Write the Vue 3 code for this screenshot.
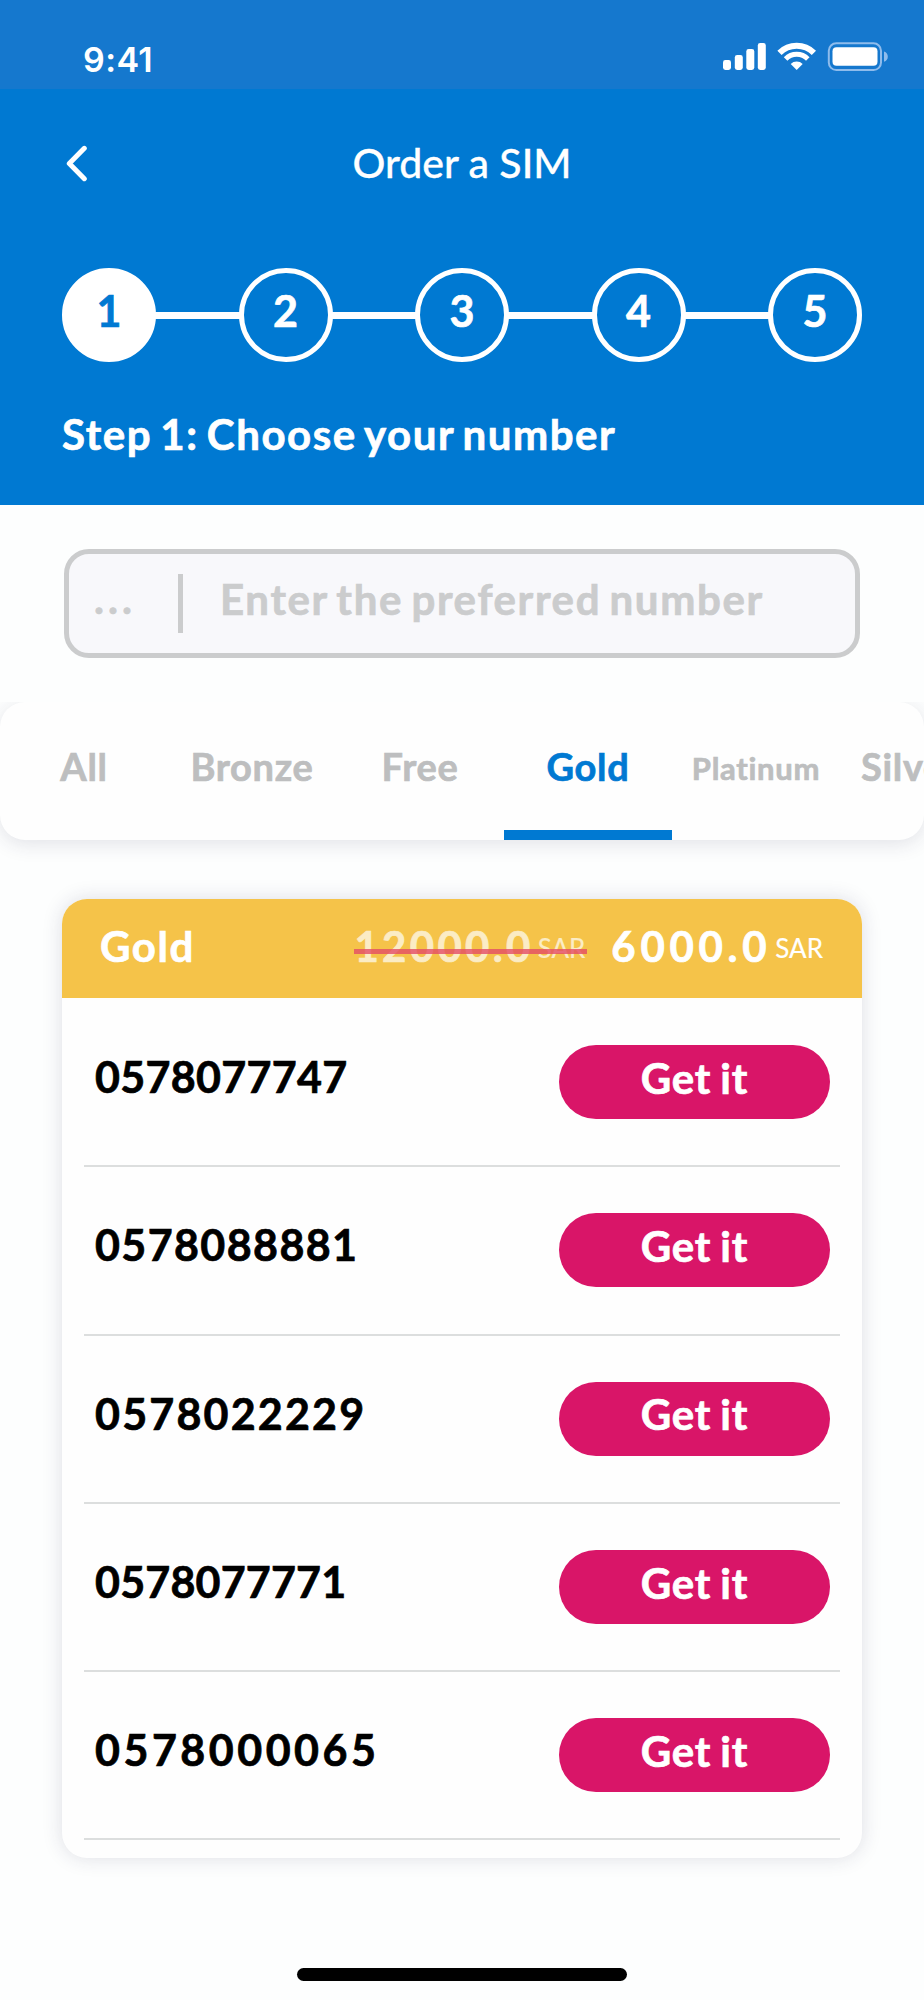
<template>
    <div class="screen">
        <header class="header">
            <div class="status-bar">
                <span class="time">9:41</span>
                <svg class="status-icons" viewBox="722 41 168 32">
                    <g fill="#fff">
                        <rect x="723" y="60" width="8" height="10" rx="2.4" />
                        <rect x="734.8" y="55" width="8" height="15" rx="2.4" />
                        <rect x="746.3" y="49" width="8" height="21" rx="2.4" />
                        <rect x="757.8" y="43" width="8" height="27" rx="2.4" />
                        <path d="M796.7 70 L790.7 63.9 A8.6 8.6 0 0 1 802.7 63.9 Z" />
                        <rect x="832.5" y="47.2" width="45" height="18.6" rx="4" />
                    </g>
                    <g fill="none" stroke="#fff">
                        <path stroke-width="6" d="M779.5 52.8 A24.4 24.4 0 0 1 813.9 52.8" />
                        <path stroke-width="5" d="M785.6 58.9 A15.7 15.7 0 0 1 807.8 58.9" />
                    </g>
                    <rect x="828.8" y="43.3" width="52.2" height="26.8" rx="7.5" fill="none" stroke="#8fbcec" stroke-width="2" />
                    <path d="M884 51.6 Q887.8 53 887.8 56.7 Q887.8 60.4 884 61.8 Z" fill="#8fbcec" />
                </svg>
            </div>

            <div class="nav-bar">
                <button class="back-btn" aria-label="Back">
                    <svg viewBox="0 0 22 37">
                        <path d="M18.3 3.3 L3.3 18.5 L18.3 33.7" />
                    </svg>
                </button>
                <h1 class="title">Order a SIM</h1>
            </div>

            <div class="steps">
                <template v-for="step in 5" :key="step">
                    <div v-if="step > 1" class="step-line"></div>
                    <div class="step" :class="{ active: step === currentStep }">{{ step }}</div>
                </template>
            </div>

            <h2 class="step-title">Step 1: Choose your number</h2>
        </header>

        <div class="search">
            <span class="prefix">...</span>
            <span class="divider"></span>
            <span class="placeholder">Enter the preferred number</span>
        </div>

        <div class="tabs-wrap">
            <nav class="tabs">
                <button
                    v-for="tab in tabs"
                    :key="tab"
                    class="tab"
                    :class="{ active: tab === activeTab, small: tab === 'Platinum' }"
                    @click="activeTab = tab"
                >
                    {{ tab }}
                </button>
            </nav>
        </div>

        <section class="card">
            <div class="card-header">
                <span class="card-name">Gold</span>
                <span class="price old"><span class="amount">12000.0</span><small>SAR</small></span>
                <span class="price new"><span class="amount">6000.0</span><small>SAR</small></span>
            </div>
            <div v-for="item in numbers" :key="item.value" class="row">
                <span class="number" :style="{ letterSpacing: item.tracking + 'px' }">{{ item.value }}</span>
                <button class="get-btn">Get it</button>
            </div>
        </section>

        <div class="home-indicator"></div>
    </div>
</template>

<script setup>
import { ref } from "vue";

const currentStep = ref(1);
const activeTab = ref("Gold");
const tabs = ["All", "Bronze", "Free", "Gold", "Platinum", "Silver"];

const numbers = [
    { value: "0578077747", tracking: 0.3 },
    { value: "0578088881", tracking: 1.4 },
    { value: "0578022229", tracking: 2.2 },
    { value: "0578077771", tracking: 0.2 },
    { value: "0578000065", tracking: 3.5 }
];
</script>

<style>
body {
    margin: 0;
    background: #fdfefe;
}
</style>

<style scoped>
.screen {
    box-sizing: border-box;
    width: 924px;
    height: 2000px;
    overflow: hidden;
    background: #fdfefe;
    font-family: Lato, "Liberation Sans", sans-serif;
    font-weight: 700;
    font-variant-ligatures: none;
    -webkit-text-stroke: 0.7px currentColor;
    white-space: nowrap;
}

button {
    border: none;
    padding: 0;
    background: none;
    font: inherit;
    cursor: pointer;
}

.header {
    height: 505px;
    background: #0079d2;
    color: #fff;
}

.status-bar {
    box-sizing: border-box;
    height: 89px;
    padding: 29px 34px 0 83px;
    display: flex;
    justify-content: space-between;
    align-items: center;
    background: #1578ce;
}

.time {
    font-family: Inter, sans-serif;
    font-size: 34px;
    font-weight: 600;
    letter-spacing: 0.4px;
    -webkit-text-stroke: 0;
}

.status-icons {
    width: 168px;
    height: 32px;
    margin-bottom: 5px;
}

.nav-bar {
    display: grid;
    grid-template-columns: 84px 1fr 84px;
    align-items: center;
    height: 148px;
    padding: 0 20px 0 20px;
}

.back-btn {
    display: flex;
    width: 22px;
    height: 37px;
    margin-left: 46px;
}

.back-btn svg {
    width: 22px;
    height: 37px;
    fill: none;
    stroke: #fff;
    stroke-width: 5;
    stroke-linecap: round;
    stroke-linejoin: round;
}

.title {
    margin: 0;
    padding-bottom: 1px;
    text-align: center;
    font-size: 41px;
    font-weight: 500;
    -webkit-text-stroke: 0.3px currentColor;
}

.steps {
    display: flex;
    align-items: center;
    margin: 31px 62px 0;
}

.step {
    box-sizing: border-box;
    width: 94px;
    height: 94px;
    padding-bottom: 9px;
    border: 5px solid #fff;
    border-radius: 50%;
    display: flex;
    align-items: center;
    justify-content: center;
    font-size: 43px;
}

.step.active {
    background: #fff;
    color: #0079d2;
}

.step-line {
    flex: 1;
    height: 7px;
    margin: 0 -1px;
    background: #fff;
}

.step-title {
    margin: 46px 62px 0;
    font-size: 42px;
    line-height: 52px;
    letter-spacing: 1.55px;
    word-spacing: -3.5px;
}

.search {
    box-sizing: border-box;
    display: flex;
    align-items: center;
    width: 796px;
    height: 109px;
    margin: 44px 64px 0;
    padding-left: 25px;
    border: 5px solid #cbcccd;
    border-radius: 25px;
    background: #f8f8fb;
    color: #cbcccd;
    font-size: 42px;
}

.prefix {
    width: 84px;
    padding-bottom: 12px;
    letter-spacing: 4px;
}

.divider {
    width: 5px;
    height: 59px;
    margin-right: 37px;
    background: #cbcccd;
}

.placeholder {
    padding-bottom: 9px;
    letter-spacing: 1.65px;
    word-spacing: -3.5px;
}

.tabs-wrap {
    margin-top: 44px;
    height: 170px;
    overflow: hidden;
}

.tabs {
    display: flex;
    width: 924px;
    height: 138px;
    overflow: hidden;
    border-radius: 25px;
    background: #fefefe;
    box-shadow: 0 4px 20px rgba(40, 40, 80, 0.13);
}

.tab {
    box-sizing: border-box;
    flex: 0 0 168px;
    border-bottom: 10px solid transparent;
    color: #bdbebf;
    font-size: 38px;
    line-height: 116px;
    letter-spacing: 0.7px;
}

.tab.small {
    font-size: 31px;
    padding-top: 4px;
}

.tab:last-child {
    padding-left: 21px;
    text-align: left;
}

.tab.active {
    border-bottom-color: #0079d2;
    color: #0079d2;
}

.card {
    box-sizing: border-box;
    width: 800px;
    height: 959px;
    margin: 27px 62px 0;
    overflow: hidden;
    border-radius: 25px;
    background: #fefefe;
    box-shadow: 0 0 20px rgba(40, 40, 80, 0.15);
}

.card-header {
    box-sizing: border-box;
    display: flex;
    align-items: flex-start;
    height: 99px;
    margin-bottom: 1px;
    padding: 22px 39px 0 38px;
    background: #f5c349;
    color: #fff;
    font-size: 42px;
    line-height: 50px;
}

.card-name {
    margin-right: auto;
    letter-spacing: 1.6px;
}

.price {
    position: relative;
    display: flex;
    align-items: flex-end;
    gap: 4px;
}

.amount {
    letter-spacing: 3.3px;
}

.new .amount {
    letter-spacing: 4.7px;
}

.price small {
    margin-bottom: 10px;
    font-size: 26px;
    line-height: 26px;
    font-weight: 400;
    -webkit-text-stroke: 0.2px currentColor;
}

.price.old {
    margin-right: 26px;
    color: #fbecc5;
}

.price.old::after {
    content: "";
    position: absolute;
    left: 0;
    right: -2px;
    top: 28px;
    height: 5px;
    background: rgba(227, 76, 102, 0.8);
}

.row {
    box-sizing: border-box;
    display: flex;
    align-items: center;
    justify-content: space-between;
    height: 168.3px;
    margin: 0 22px;
    padding: 0 10px 0 11px;
    border-bottom: 2px solid #dcdede;
}

.number {
    padding-bottom: 11px;
    color: #000;
    font-size: 43px;
}

.get-btn {
    box-sizing: border-box;
    width: 271px;
    height: 74px;
    padding-bottom: 9px;
    border-radius: 37px;
    background: #d91568;
    color: #fff;
    font-size: 42px;
    letter-spacing: 0.8px;
    word-spacing: -2px;
}

.home-indicator {
    width: 330px;
    height: 13px;
    margin: 110px auto 0;
    border-radius: 7px;
    background: #000;
}
</style>
